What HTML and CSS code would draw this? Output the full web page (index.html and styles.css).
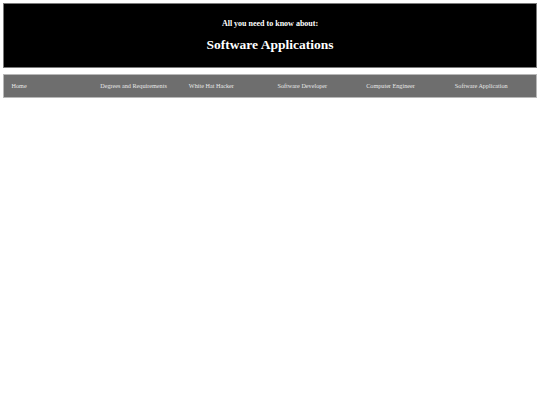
FILE: index.html
```html
<!DOCTYPE html>
<html>
<head>
<meta charset="utf-8">
<link rel="stylesheet" href="styles.css">
</head>
<body>
<header class="banner">
  <p class="kicker">All you need to know about:</p>
  <h1 class="title">Software Applications</h1>
</header>
<nav class="menu">
  <a class="item" href="#">Home</a>
  <a class="item" href="#">Degrees and Requirements</a>
  <a class="item" href="#">White Hat Hacker</a>
  <a class="item" href="#">Software Developer</a>
  <a class="item" href="#">Computer Engineer</a>
  <a class="item" href="#">Software Application</a>
</nav>
</body>
</html>
```
FILE: styles.css
```css
html, body {
  margin: 0;
  padding: 0;
  background: #ffffff;
}
body {
  padding: 3px;
  font-family: "Liberation Serif", "Times New Roman", serif;
}
.banner {
  background: #000000;
  border: 1px solid #7a7a7a;
  height: 63px;
  display: flex;
  flex-direction: column;
  align-items: center;
  color: #ffffff;
}
.kicker {
  margin: 15px 0 0 0;
  font-size: 8px;
  font-weight: bold;
  line-height: 10px;
}
.title {
  margin: 8px 0 0 0;
  font-size: 13.5px;
  font-weight: bold;
  line-height: 16px;
}
.menu {
  margin-top: 6px;
  background: #6e6e6e;
  border: 1px solid #b8b8b8;
  height: 22px;
  display: flex;
  align-items: center;
}
.item {
  flex: 1 1 0;
  padding-left: 7.5px;
  color: #e8e8e8;
  text-decoration: none;
  font-size: 6.2px;
  line-height: 8px;
}
```
